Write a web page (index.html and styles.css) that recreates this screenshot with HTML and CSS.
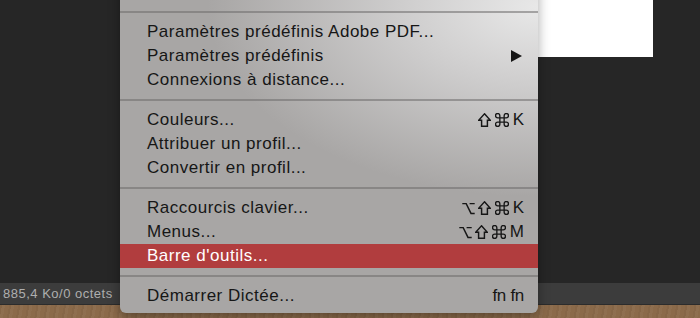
FILE: index.html
```html
<!DOCTYPE html>
<html lang="fr">
<head>
<meta charset="UTF-8" />
<title>Menu Édition</title>
<link rel="stylesheet" href="styles.css">
</head>
<body>

<div class="screen">
  <div class="workspace">
    <div class="doc"></div>
  </div>
  <div class="statusbar"><span class="info">885,4 Ko/0 octets</span></div>
  <div class="desk"></div>

  <!-- Edit menu, opened over the workspace -->
  <ul class="menu">
    <li class="item"><span class="label">Purger</span><span class="arrow"></span></li>
    <li class="sep"></li>
    <li class="item"><span class="label">Paramètres prédéfinis Adobe PDF...</span></li>
    <li class="item"><span class="label">Paramètres prédéfinis</span><span class="arrow"></span></li>
    <li class="item"><span class="label">Connexions à distance...</span></li>
    <li class="sep"></li>
    <li class="item"><span class="label">Couleurs...</span>
      <span class="key">
        <svg class="glyph" viewBox="0 0 12 13"><path d="M6 0.8L11.4 6.7H8.7V12.3H3.3V6.7H0.6Z"/></svg>
        <svg class="glyph cmd" viewBox="0 0 13 13"><path d="M4.5 4.5H8.5V8.5H4.5Z M4.5 4.5V2.5A2 2 0 1 0 2.5 4.5H4.5 M8.5 4.5V2.5A2 2 0 1 1 10.5 4.5H8.5 M8.5 8.5H10.5A2 2 0 1 1 8.5 10.5V8.5 M4.5 8.5V10.5A2 2 0 1 1 2.5 8.5H4.5"/></svg>
        <span class="letter">K</span>
      </span>
    </li>
    <li class="item"><span class="label">Attribuer un profil...</span></li>
    <li class="item"><span class="label">Convertir en profil...</span></li>
    <li class="sep"></li>
    <li class="item"><span class="label">Raccourcis clavier...</span>
      <span class="key">
        <svg class="glyph opt" viewBox="0 0 13 13"><path d="M0.3 1.6H4.2L9 11.4H12.7 M7.6 1.6H12.7"/></svg>
        <svg class="glyph" viewBox="0 0 12 13"><path d="M6 0.8L11.4 6.7H8.7V12.3H3.3V6.7H0.6Z"/></svg>
        <svg class="glyph cmd" viewBox="0 0 13 13"><path d="M4.5 4.5H8.5V8.5H4.5Z M4.5 4.5V2.5A2 2 0 1 0 2.5 4.5H4.5 M8.5 4.5V2.5A2 2 0 1 1 10.5 4.5H8.5 M8.5 8.5H10.5A2 2 0 1 1 8.5 10.5V8.5 M4.5 8.5V10.5A2 2 0 1 1 2.5 8.5H4.5"/></svg>
        <span class="letter">K</span>
      </span>
    </li>
    <li class="item"><span class="label">Menus...</span>
      <span class="key">
        <svg class="glyph opt" viewBox="0 0 13 13"><path d="M0.3 1.6H4.2L9 11.4H12.7 M7.6 1.6H12.7"/></svg>
        <svg class="glyph" viewBox="0 0 12 13"><path d="M6 0.8L11.4 6.7H8.7V12.3H3.3V6.7H0.6Z"/></svg>
        <svg class="glyph cmd" viewBox="0 0 13 13"><path d="M4.5 4.5H8.5V8.5H4.5Z M4.5 4.5V2.5A2 2 0 1 0 2.5 4.5H4.5 M8.5 4.5V2.5A2 2 0 1 1 10.5 4.5H8.5 M8.5 8.5H10.5A2 2 0 1 1 8.5 10.5V8.5 M4.5 8.5V10.5A2 2 0 1 1 2.5 8.5H4.5"/></svg>
        <span class="letter">M</span>
      </span>
    </li>
    <li class="item active"><span class="label">Barre d'outils...</span></li>
    <li class="sep"></li>
    <li class="item"><span class="label">Démarrer Dictée...</span><span class="key fn">fn fn</span></li>
  </ul>
</div>

</body>
</html>
```

FILE: styles.css
```css
:root {
  --panel: #262626;
  --bar: #3c3c3c;
  --ink: #161616;
  --red: #b13d3e;
}
html, body {
  margin: 0; padding: 0;
}
body {
  width: 700px;
  height: 318px;
  overflow: hidden;
  background-color: var(--panel);
  font-family: "Liberation Sans", Arial, sans-serif;
}
.screen {
  position: relative;
  display: flex;
  flex-direction: column;
  height: 318px;
}

/* Photoshop workspace */
.workspace {
  height: 283px;
  background-color: var(--panel);
}
.doc {
  margin-left: 538px;
  width: 115px;
  height: 57px;
  background-color: #fff;
}
.statusbar {
  height: 21px;
  display: flex;
  align-items: center;
  background-color: var(--bar);
  border-bottom: 1px solid #2c2c2c;
}
.info {
  padding-left: 3px;
  font-size: 13px;
  color: #aeaeae;
  letter-spacing: 0.5px;
}
.desk {
  flex: 1;
  background-color: #8b6a4a;
  background-image: repeating-linear-gradient(100deg, rgba(0,0,0,0.04) 0 2px, rgba(255,255,255,0.03) 2px 5px, rgba(0,0,0,0) 5px 9px);
}

/* The menu */
.menu {
  position: absolute;
  left: 120px;
  top: -20px;
  width: 418px;
  margin: 0;
  padding: 0 0 5px;
  list-style: none;
  border-radius: 0 0 6px 6px;
  background-color: #a8a6a5;
  background-image: radial-gradient(ellipse 330px 190px at 100% 8%, #e8e8e8 0%, #cfcece 40%, rgba(168,166,165,0) 100%);
  box-shadow: 0 4px 12px rgba(0,0,0,0.35);
  color: var(--ink);
}
.item {
  height: 24px;
  display: flex;
  align-items: center;
  justify-content: space-between;
  padding: 0 14px 0 27px;
  font-size: 17px;
  letter-spacing: 0.5px;
}
.item.active {
  background-color: var(--red);
  color: #fff;
}

/* Shortcuts */
.key {
  display: flex;
  align-items: center;
  gap: 3px;
}
.glyph {
  width: 13px;
  height: 14px;
  fill: none;
  stroke: var(--ink);
  stroke-width: 1.35;
  stroke-linejoin: miter;
}
.glyph.cmd {
  width: 14px;
  margin-left: 1px;
  stroke-width: 1.25;
}
.glyph.opt {
  width: 13px;
  height: 13px;
  stroke-width: 1.45;
}
.letter {
  margin-left: 1px;
  letter-spacing: 0;
}
.key.fn {
  display: block;
  letter-spacing: -0.3px;
}
.arrow {
  width: 0;
  height: 0;
  margin-right: 2px;
  border-left: 11px solid var(--ink);
  border-top: 6px solid transparent;
  border-bottom: 6px solid transparent;
}
.sep {
  height: 2px;
  margin: 7px 0;
  background-color: rgba(110,108,108,0.55);
}
```
